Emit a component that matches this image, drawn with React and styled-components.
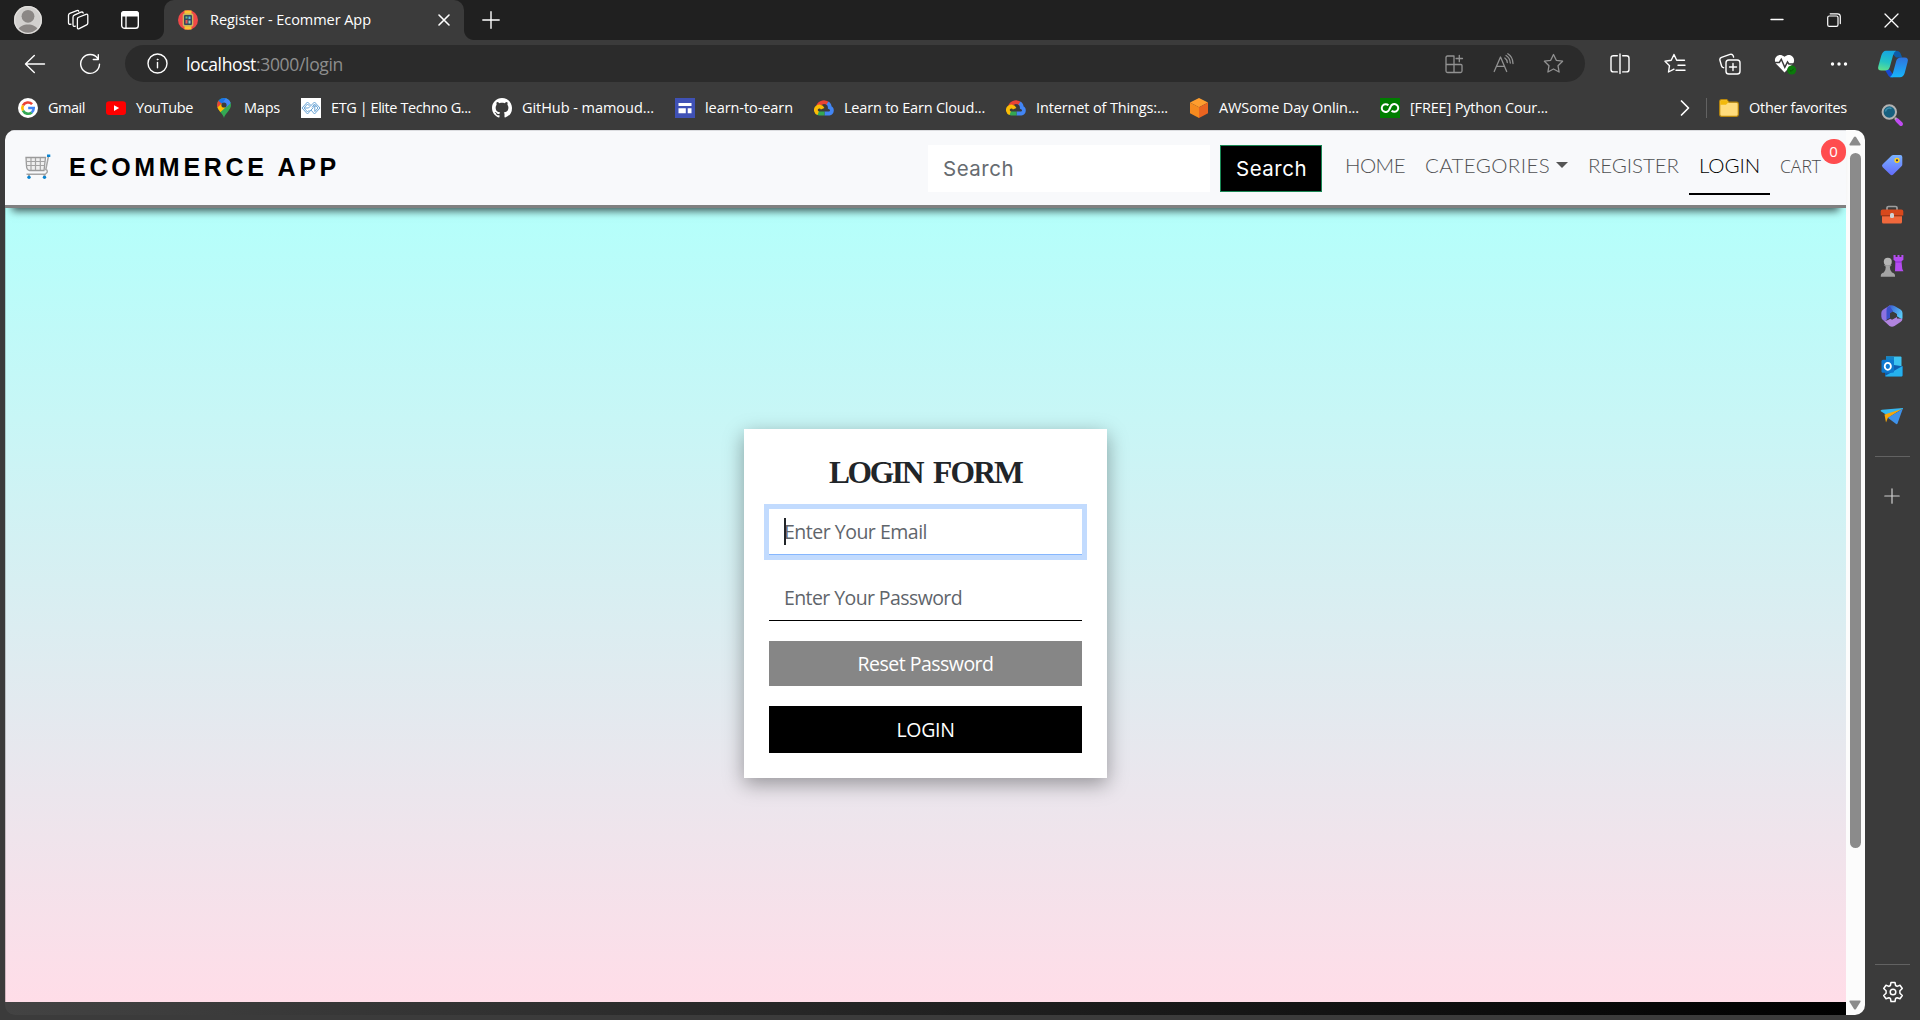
import React, { useLayoutEffect, useRef, useState } from "react";
import styled, { createGlobalStyle } from "styled-components";

const UI = `"Open Sans", "Noto Sans", sans-serif`;
const GEO = `Lato, "Open Sans", sans-serif`;
const SEARCH = `Inter, "Open Sans", sans-serif`;

const GlobalStyle = createGlobalStyle`
  * { box-sizing: border-box; }
  body { margin: 0; background: #3b3b3b; overflow: hidden; font-family: ${UI}; }
  svg { display: block; flex: none; }
`;

/* ---------- text fitted to a column width ---------- */
const Line = styled.span`
  display: inline-block;
  flex: none;
  white-space: nowrap;
  width: ${(p) => p.$width}px;
`;

function Fit({ width, children, className }) {
  const ref = useRef(null);
  const [spacing, setSpacing] = useState(0);
  useLayoutEffect(() => {
    const range = document.createRange();
    range.selectNodeContents(ref.current);
    const natural = range.getBoundingClientRect().width;
    setSpacing((width - natural) / children.length);
  }, [width, children]);
  return (
    <Line ref={ref} $width={width} className={className} style={{ letterSpacing: spacing }}>
      {children}
    </Line>
  );
}

/* ---------- browser shell ---------- */
const Shell = styled.div`
  width: 1920px;
  height: 1020px;
  display: flex;
  flex-direction: column;
  background: #3b3b3b;
  color: #fff;
  overflow: hidden;
`;
const TitleBar = styled.header`
  height: 40px;
  flex: none;
  display: flex;
  align-items: center;
  background: #202020;
`;
const TitleTools = styled.div`
  width: 164px;
  display: flex;
  align-items: center;
  gap: 25px;
  padding-left: 14px;
  & > :last-child { margin-left: 6px; }
`;
const Tab = styled.div`
  width: 300px;
  height: 40px;
  display: flex;
  align-items: center;
  padding: 0 14px;
  background: #3b3b3b;
  border-radius: 10px 10px 0 0;
  position: relative;
  &::before, &::after {
    content: "";
    position: absolute;
    bottom: 0;
    width: 10px;
    height: 10px;
  }
  &::before { left: -10px; background: radial-gradient(circle at 0 0, #202020 9.5px, #3b3b3b 10.5px); }
  &::after { right: -10px; background: radial-gradient(circle at 100% 0, #202020 9.5px, #3b3b3b 10.5px); }
`;
const TabTitle = styled(Fit)`
  margin-left: 12px;
  margin-right: auto;
  font-size: 14.5px;
  line-height: 20px;
`;
const NewTab = styled.div`
  margin-left: 18px;
`;
const WindowControls = styled.div`
  margin-left: auto;
  display: flex;
  align-items: center;
  gap: 43px;
  padding-right: 21px;
`;
const Body = styled.div`
  flex: 1;
  display: flex;
  min-height: 0;
`;
const Main = styled.div`
  width: 1865px;
  display: flex;
  flex-direction: column;
`;
const Toolbar = styled.div`
  height: 48px;
  flex: none;
  display: flex;
  align-items: center;
  padding: 0 0 1px 24px;
`;
const NavTools = styled.div`
  width: 101px;
  display: flex;
  gap: 33px;
`;
const AddressBar = styled.div`
  width: 1460px;
  height: 37px;
  border-radius: 19px;
  background: #2b2b2b;
  display: flex;
  align-items: center;
  padding: 0 21px 0 22px;
`;
const Url = styled.div`
  display: flex;
  margin-left: 18px;
  margin-right: auto;
  font-size: 17.5px;
  line-height: 24px;
`;
const Host = styled(Fit)` color: #fff; `;
const Path = styled(Fit)` color: #8e8e8e; `;
const AddressTools = styled.div`
  display: flex;
  align-items: center;
  gap: 29px;
`;
const ToolGroup = styled.div`
  display: flex;
  align-items: center;
  gap: 33px;
  margin-left: 24px;
`;
const Bookmarks = styled.nav`
  height: 42px;
  flex: none;
  display: flex;
  align-items: center;
  gap: 21px;
  padding: 0 18px 2px;
`;
const Bookmark = styled.div`
  display: flex;
  align-items: center;
  gap: 10px;
  font-size: 14.5px;
  line-height: 20px;
`;
const Overflow = styled.div`
  margin-left: auto;
  display: flex;
  align-items: center;
  gap: 16px;
`;
const Rule = styled.div`
  width: ${(p) => p.$w}px;
  height: ${(p) => p.$h}px;
  flex: none;
  background: #626262;
`;
const Folder = styled(Bookmark)` margin-left: -4px; `;

/* ---------- sidebar ---------- */
const Sidebar = styled.aside`
  width: 55px;
  display: flex;
  flex-direction: column;
  align-items: center;
  padding: 9px 0 17px;
`;
const SideApps = styled.div`
  display: flex;
  flex-direction: column;
  gap: 26.2px;
  margin: 24px 2px 28px 0;
`;
const SideAdd = styled.div` margin: 31px 1px auto 0; `;
const SideGear = styled.div` margin-top: 16px; `;

/* ---------- page ---------- */
const Page = styled.div`
  margin-left: 5px;
  height: 885px;
  display: flex;
  border-radius: 10px;
  overflow: hidden;
  background: #3b3b3b;
`;
const Content = styled.div`
  width: 1841px;
  display: flex;
  flex-direction: column;
`;
const NavBar = styled.div`
  height: 78px;
  flex: none;
  display: flex;
  align-items: flex-start;
  position: relative;
  z-index: 1;
  background: #f8f9fb;
  border-top: 1px solid #dcdde0;
  border-bottom: 3px solid #808080;
  box-shadow: 0 10px 8px -7px rgba(0, 0, 0, 0.65);
`;
const Brand = styled.div`
  display: flex;
  align-items: center;
  gap: 18px;
  margin: 21px auto 0 20px;
  color: #000;
  font: bold 25px/30px "Liberation Sans", Arial, sans-serif;
`;
const SearchForm = styled.form`
  display: flex;
  gap: 10px;
  margin: 14px 23px 0 0;
  font-family: ${SEARCH};
  font-size: 20.5px;
`;
const SearchField = styled.div`
  width: 282px;
  height: 47px;
  padding: 0 15px;
  line-height: 47px;
  background: #fff;
  color: #666b70;
`;
const SearchButton = styled.button`
  width: 102px;
  height: 47px;
  padding: 0 0 0 15px;
  text-align: left;
  border: 1px solid #198754;
  background: #000;
  color: #fff;
  font: 400 20.5px/45px ${SEARCH};
`;
const Links = styled.div`
  display: flex;
  align-items: flex-start;
  font: 300 20.5px/30px ${GEO};
  color: #505153;
`;
const NavItem = styled.div`
  height: 64px;
  display: flex;
  align-items: center;
  padding: 19px 10px 15px 10px;
  gap: 6px;
  ${(p) => p.$active && "color: #000; border-bottom: 2px solid #000; padding-bottom: 13px;"}
  &:first-child { padding-left: 0; }
`;
const Caret = styled.i`
  border: 6px solid transparent;
  border-top-color: #555;
  border-bottom: 0;
`;
const Cart = styled.div`
  width: 76px;
  padding: 20px 0 0 10px;
  position: relative;
  font: 300 17.5px/30px ${UI};
  color: #4b4b4b;
`;
const Badge = styled.span`
  position: absolute;
  right: 0;
  top: 8px;
  width: 25px;
  height: 25px;
  border-radius: 13px 12px 12px 13px;
  background: #ff4d4f;
  color: #fff;
  font: 400 15px/25px ${UI};
  text-align: center;
`;
const Backdrop = styled.main`
  flex: 1;
  display: flex;
  justify-content: center;
  align-items: flex-start;
  padding-top: 221px;
  background: linear-gradient(to bottom, #b4fffb, #ffdde8);
  box-shadow: inset 1px 0 rgba(0, 0, 0, 0.18);
`;
const Card = styled.form`
  width: 363px;
  height: 349px;
  display: flex;
  flex-direction: column;
  align-items: stretch;
  padding: 25px;
  background: #fff;
  box-shadow: 0 6px 19px rgba(0, 0, 0, 0.36);
`;
const Heading = styled.h4`
  flex: none;
  margin: -1px 0 16px;
  height: 40px;
  display: flex;
  justify-content: center;
  gap: 11px;
  color: #212529;
  font: bold 31.5px/40px "Liberation Serif", "Times New Roman", serif;
`;
const Field = styled.div`
  flex: none;
  height: 46px;
  margin-bottom: 20px;
  padding: 0 15px;
  line-height: 46px;
  font-size: 19.5px;
  color: #5f656b;
  position: relative;
  border-bottom: 1px solid ${(p) => (p.$focus ? "#86b7fe" : "#000")};
  ${(p) => p.$focus && "box-shadow: 0 0 0 5px #c2dbfe;"}
`;
const TextCursor = styled.i`
  position: absolute;
  left: 15px;
  top: 9px;
  width: 2px;
  height: 27px;
  background: #212529;
`;
const Action = styled.button`
  height: ${(p) => p.$height}px;
  flex: none;
  display: flex;
  justify-content: center;
  align-items: center;
  margin: 0 0 20px;
  padding: 0;
  border: 0;
  background: ${(p) => p.$bg};
  color: #fff;
  font: 400 19.5px/28px ${UI};
`;
const Footer = styled.footer`
  height: 13px;
  flex: none;
  background: linear-gradient(to right, #434343, #000);
`;
const Scrollbar = styled.div`
  width: 19px;
  background: #fcfcfc;
  display: flex;
  flex-direction: column;
  align-items: center;
  padding: 6px 1px 5px 0;
`;
const Thumb = styled.div`
  width: 11px;
  height: 695px;
  margin: 7px 0 auto;
  border-radius: 6px;
  background: #8b8b8b;
`;

/* ---------- icons ---------- */
const Stroke = ({ w = 20, h = w, box, color = "#fff", sw = 1.4, children }) => (
  <svg width={w} height={h} viewBox={box || `0 0 ${w} ${h}`} fill="none" stroke={color} strokeWidth={sw} strokeLinecap="round" strokeLinejoin="round">
    {children}
  </svg>
);

const Avatar = () => (
  <svg width="28" height="28" viewBox="0 0 28 28">
    <defs><clipPath id="av"><circle cx="14" cy="14" r="14" /></clipPath></defs>
    <g clipPath="url(#av)">
      <rect width="28" height="28" fill="#d2d0ce" />
      <circle cx="14" cy="10.3" r="6.4" fill="#8b8785" />
      <path d="M3.5 24C7 16.500 21 16.500 24.500 24L24 28H4z" fill="#8b8785" />
    </g>
    <circle cx="14" cy="14" r="13.300" fill="none" stroke="#e1dfdd" strokeWidth="1.300" />
  </svg>
);
const Workspaces = () => (
  <Stroke w={22} sw={1.3}>
    <path d="M11 8.500l8-3.200q1.800-.6 1.800 1.200v7.500q0 1.200-1.200 1.800l-7.400 3.800q-1.800.8-1.800-1.200v-8.200q0-1.200.6-1.700z" />
    <path d="M8.300 17.200q-2.300.8-2.300-1.400V8.200q0-1.400 1.300-2L14 3.200q1.600-.6 2.200.8" />
    <path d="M4 15.200q-2.500.7-2.500-1.500V6.300q0-1.400 1.300-1.900l7-2.800q1.500-.5 2 .6" />
  </Stroke>
);
const TabActions = () => (
  <svg width="20" height="20" viewBox="0 0 20 20">
    <rect x="1.700" y="1.700" width="16.600" height="16.600" rx="2.800" fill="none" stroke="#fff" strokeWidth="1.400" />
    <path d="M1 6V4q0-3 3-3h12q3 0 3 3v2.500H1z" fill="#fff" />
    <path d="M6 6v12" stroke="#fff" strokeWidth="1.300" />
  </svg>
);
const WatchFavicon = () => (
  <svg width="20" height="20" viewBox="0 0 20 20">
    <circle cx="10" cy="10" r="10" fill="#f04848" />
    <path d="M6.500 .5h7v4h-7zM6.500 15.500h7v4h-7z" fill="#fbc531" />
    <rect x="4.700" y="3.500" width="10.600" height="13" rx="1.500" fill="#c9b45c" />
    <rect x="6" y="5" width="8" height="10" rx="1" fill="#34495e" />
    <path d="M7.500 6.500h2v2h-2z" fill="#69c779" /><path d="M10.500 6.500h2v2.500h-2z" fill="#5db9e8" />
    <path d="M7.500 10h2v3.500h-2z" fill="#e85b54" /><path d="M10.500 10.500h2v3h-2z" fill="#8fd0c0" />
  </svg>
);
const Cross = ({ size, sw = 1.4 }) => (
  <Stroke w={size} sw={sw}><path d={`M1 1L${size - 1} ${size - 1}M${size - 1} 1L1 ${size - 1}`} /></Stroke>
);
const Plus = ({ size = 18, color = "#fff", sw = 1.4 }) => (
  <Stroke w={size} color={color} sw={sw}><path d={`M${size / 2} .8V${size - 0.8}M.8 ${size / 2}H${size - 0.8}`} /></Stroke>
);
const Restore = () => (
  <Stroke w={14} sw={1.2}><rect x=".7" y="3" width="10.300" height="10.300" rx="1.600" /><path d="M3.200.8h7.300q2.800 0 2.800 2.800v7" /></Stroke>
);
const Back = () => (<Stroke w={22}><path d="M20.500 11H1.700M10.300 2.500L1.500 11l8.800 8.500" /></Stroke>);
const Reload = () => (<Stroke w={22}><path d="M18.800 5.500a9.400 9.400 0 1 0 1.700 5.800M19.300 1.700v4.800h-5" /></Stroke>);
const Info = () => (
  <Stroke w={21}><circle cx="10.500" cy="10.500" r="9.500" /><path d="M10.500 9.500v5.300" /><circle cx="10.500" cy="6.500" r=".5" fill="#fff" stroke="#fff" strokeWidth=".8" /></Stroke>
);
const AppAdd = () => (
  <Stroke w={20} color="#929292" sw={1.3}><path d="M9.500 2H3.500Q2 2 2 3.500V17q0 1.500 1.500 1.500h13q1.500 0 1.500-1.500v-5.500q0-1-1-1H2M10 2v16.500M15.300 1.300v6.400M12.100 4.500h6.400" /></Stroke>
);
const ReadAloud = () => (
  <Stroke w={21} color="#929292" sw={1.3}><path d="M1.200 18.500L7.500 4l6.200 14.500M3.500 13.300h8M11.800 5q2.300 1.500 2.500 4.500M13 2.500q4 2.300 4.300 7.500M14.800.8q5 3 5.200 9.700" /></Stroke>
);
const starPath = "M10.500 1.500l2.800 5.800 6.300.9-4.600 4.500 1.100 6.300-5.600-3-5.600 3 1.100-6.300-4.600-4.500 6.300-.9z";
const Star = () => (<Stroke w={21} color="#929292" sw={1.3}><path d={starPath} /></Stroke>);
const Split = () => (
  <Stroke w={22} sw={1.4}><path d="M8.300 2.700H4.500q-2.500 0-2.500 2.500v11.200q0 2.500 2.500 2.500h3.800M13.700 2.700h3.800q2.500 0 2.500 2.500v11.200q0 2.500-2.500 2.500h-3.800M11 1v19.500" /></Stroke>
);
const FavList = () => (
  <Stroke w={22} sw={1.4}><path d="M12.700 7.300L10 1.500 7.200 7.300l-6.200.9 4.500 4.500-1 6.300L10 16.200M12.700 7.300h7.800M14 12.300h7M12 17.300h9" /></Stroke>
);
const Collections = () => (
  <Stroke w={22} sw={1.4}><rect x="7" y="7" width="14" height="14" rx="2.800" /><path d="M14 10.500v7M10.500 14h7M4.600 14.700l-.8-.3q-1-.5-1.300-1.600L1 7.500q-.7-2.300 1.500-3.200L11 1.400q2.300-.7 3.200 1.400l.4 1.300" /></Stroke>
);
const HeartPulse = () => (
  <svg width="23" height="22" viewBox="0 0 23 22">
    <path d="M10.500 19.500L2 10.700C-1.500 6 4-1.200 10.500 3.800 17-1.200 22.500 6 19 10.700z" fill="#fff" />
    <path d="M0 9.500h5.300l2-3.200 3.500 8 2.700-5.300 1.400 2H21" fill="none" stroke="#3b3b3b" strokeWidth="1.500" />
    <circle cx="17.700" cy="17" r="4.500" fill="#0b7a0b" />
    <path d="M15.700 17l1.400 1.400 2.600-2.700" fill="none" stroke="#075507" strokeWidth="1" />
  </svg>
);
const Dots = () => (
  <svg width="18" height="6" viewBox="0 0 18 6" fill="#fff"><circle cx="2.500" cy="3" r="1.700" /><circle cx="9" cy="3" r="1.700" /><circle cx="15.500" cy="3" r="1.700" /></svg>
);
const Google = () => (
  <svg width="20" height="20" viewBox="0 0 20 20">
    <circle cx="10" cy="10" r="10" fill="#fff" />
    <g fill="none" strokeWidth="2.600">
      <path d="M14.100 6.200A5.700 5.700 0 0 0 5 7.400" stroke="#ea4335" />
      <path d="M5 7.400A5.700 5.700 0 0 0 5 12.700" stroke="#fbbc05" />
      <path d="M5 12.600A5.700 5.700 0 0 0 13.800 14.400" stroke="#34a853" />
      <path d="M13.700 14.400A5.700 5.700 0 0 0 15.700 10H10.200" stroke="#4285f4" />
    </g>
  </svg>
);
const YouTube = () => (
  <svg width="20" height="20" viewBox="0 0 20 20"><rect y="3.300" width="20" height="13.700" rx="3.200" fill="#f00" /><path d="M8 7.200l5.200 2.900L8 13z" fill="#fff" /></svg>
);
const MapPin = () => (
  <svg width="20" height="20" viewBox="0 0 20 20">
    <defs><clipPath id="pin"><path d="M10 20C9 15.500 3 12 3 7a7 7 0 0 1 14 0c0 5-6 8.500-7 13z" /></clipPath></defs>
    <g clipPath="url(#pin)">
      <rect width="20" height="20" fill="#34a853" />
      <path d="M0 2l4 0 6 5-6 7-4-3z" fill="#ea4335" />
      <path d="M2 10.500L9 4.500l3.500 4L5.500 15z" fill="#fbbc04" />
      <path d="M7.500 3.200L9.500-1H18v5l-6 5.500z" fill="#4285f4" />
      <path d="M4 2.500l4 3.300L12 0H6z" fill="#1a73e8" />
    </g>
    <circle cx="10" cy="7" r="2.600" fill="#3b3b3b" />
  </svg>
);
const Etg = () => (
  <svg width="20" height="20" viewBox="0 0 20 20">
    <rect width="20" height="20" fill="#fff" />
    <g fill="none" stroke="#5b9bd0" strokeWidth=".9">
      <path d="M10 12l-3.500 4L1 10l5.500-6L10 7.500 13.500 4 19 10l-5.500 6L10 12l2.500-2.500M10 7.500L7.500 10" />
      <path d="M8.500 8L6.500 6 3 10l3.500 4 2-2M4 10h3.500M12 8h3.500M13.800 8v5M11 9.500L13.500 6 17 10l-3.500 4" />
    </g>
  </svg>
);
const GitHub = () => (
  <svg width="20" height="20" viewBox="0 0 16 16" fill="#fff"><path d="M8 0C3.580 0 0 3.580 0 8c0 3.540 2.290 6.530 5.470 7.590.4.070.55-.17.55-.38 0-.19-.01-.82-.01-1.490-2.010.37-2.530-.49-2.690-.94-.09-.23-.48-.94-.82-1.130-.28-.15-.68-.52-.01-.53.63-.01 1.080.58 1.230.82.72 1.210 1.870.87 2.330.66.070-.52.28-.87.51-1.070-1.780-.2-3.640-.89-3.640-3.950 0-.87.31-1.590.82-2.150-.08-.2-.36-1.020.08-2.120 0 0 .67-.21 2.200.82.64-.18 1.320-.27 2-.27s1.360.09 2 .27c1.530-1.040 2.200-.82 2.200-.82.44 1.100.16 1.920.08 2.120.51.56.82 1.270.82 2.150 0 3.070-1.870 3.750-3.650 3.950.29.25.54.73.54 1.480 0 1.070-.01 1.930-.01 2.200 0 .21.15.46.55.38A8.010 8.010 0 0 0 16 8c0-4.420-3.580-8-8-8z" /></svg>
);
const Sites = () => (
  <svg width="20" height="20" viewBox="0 0 20 20"><rect width="20" height="20" fill="#3f51b5" /><path d="M3.500 5h13v3h-13zM3.500 10.300h7.300v5H3.500zM12.700 10.300h3.800v5h-3.800z" fill="#fff" /></svg>
);
const Cloud = () => (
  <svg width="20" height="20" viewBox="0 0 20 20" fill="none" strokeWidth="3.800">
    <path d="M4 8.200A6.300 6.300 0 0 1 14.500 6.200" stroke="#ea4335" />
    <path d="M13.500 5q2.300 1.500 2.300 4.500a3.100 3.100 0 0 1-.6 6H10.500" stroke="#4285f4" />
    <path d="M10.500 15.500H5.500L3 14.800" stroke="#34a853" />
    <path d="M4.200 15.300A3.500 3.500 0 1 1 8.600 10.700" stroke="#fbbc05" />
  </svg>
);
const AwsCube = () => (
  <svg width="20" height="20" viewBox="0 0 20 20"><path d="M10 0l9 4.500-9 4.700-9-4.700z" fill="#ff9d2e" /><path d="M1 4.500l9 4.700V20l-9-4.700z" fill="#f58a1f" /><path d="M19 4.500l-9 4.700V20l9-4.700z" fill="#ea6420" /></svg>
);
const Infinity8 = () => (
  <svg width="20" height="20" viewBox="0 0 20 20"><rect width="20" height="20" fill="#007d00" /><path d="M8.400 7.300A3.900 3.900 0 1 0 9.300 11.500L10.700 8.500A3.900 3.900 0 1 1 11.600 12.700" fill="none" stroke="#fff" strokeWidth="2" /></svg>
);
const FolderIcon = () => (
  <svg width="20" height="20" viewBox="0 0 20 20"><path d="M.7 3.500q0-1.800 1.800-1.800h5.300l2 2.500h7.700q1.800 0 1.800 1.800v10.500q0 1.800-1.800 1.800h-15q-1.800 0-1.800-1.800z" fill="#ffdc7c" stroke="#b8860b" strokeWidth="1.200" /><path d="M1.300 6.700V3.500q0-1.200 1.200-1.200h5l1.700 2.100-2.200 2.300z" fill="#f2b90c" /></svg>
);
const CartIcon = () => (
  <svg width="26" height="26" viewBox="0 0 26 26" fill="none">
    <path d="M1 3.500h19.500L19 16.500H4.500Q1.700 16 1.500 12z" fill="#efefef" stroke="#9b9b9b" strokeWidth="1.300" />
    <path d="M1.500 7.500H20M1.500 11.500h18M6 4v12M10.500 4v12M15.300 4v12" stroke="#a3a3a3" strokeWidth="1.200" />
    <path d="M23.500 2l-2.700 13.500q3 1.500.2 4l-1 .8H1.500" stroke="#a6a6a6" strokeWidth="1.500" />
    <path d="M22 1.800h3.300" stroke="#0a84d0" strokeWidth="2.400" />
    <circle cx="4" cy="23.300" r="1.700" fill="#0a84d0" /><circle cx="19.500" cy="23.300" r="1.700" fill="#0a84d0" />
    <path d="M3 21h2M18.500 21h2" stroke="#999" strokeWidth="1.500" />
  </svg>
);
const Copilot = () => (
  <svg width="32" height="30" viewBox="0 0 32 30">
    <defs>
      <linearGradient id="cpa" x1=".4" y1="0" x2=".2" y2="1"><stop stopColor="#16a6e2" /><stop offset=".55" stopColor="#24c4c4" /><stop offset="1" stopColor="#62e28c" /></linearGradient>
      <linearGradient id="cpb" x1=".5" y1="0" x2=".5" y2="1"><stop stopColor="#2f72dd" /><stop offset="1" stopColor="#17b5fa" /></linearGradient>
    </defs>
    <path d="M13 2h7q3 0 4.200 4l1 2.500H19z" fill="#0d5ca8" />
    <path d="M8 21l4.500-.5L17 27l-1 1.500q-4 0-5-2.500z" fill="#1749d1" />
    <path d="M9 1.800h10q-2 1.200-3 4.700L12.800 18q-.9 3.500-4.800 3.500H4.500Q0 21.500 1.400 17L4.300 6.500Q5.800 1.800 9 1.800z" fill="url(#cpa)" />
    <path d="M23 28.300H13q2-1.500 3-4.500L19.200 12q.9-3.500 4.800-3.500h3.500Q32 8.500 30.600 13L27.700 24q-1.500 4.300-4.700 4.300z" fill="url(#cpb)" />
  </svg>
);
const SideIcon = ({ children }) => (<svg width="24" height="24" viewBox="0 0 24 24">{children}</svg>);
const Magnifier = () => (
  <SideIcon>
    <path d="M15 15l2 2" stroke="#b5b5b5" strokeWidth="2.500" />
    <path d="M17.300 17.300l3.700 3.700" stroke="#c04bf2" strokeWidth="4" strokeLinecap="round" />
    <circle cx="9.300" cy="9" r="6.700" fill="#17607f" stroke="#b3b3b3" strokeWidth="2" />
    <path d="M5.500 8.500a4 4 0 0 1 6-3" fill="none" stroke="#3e8fae" strokeWidth="1.500" />
  </SideIcon>
);
const Tag = () => (
  <SideIcon>
    <defs><linearGradient id="tg" x1=".5" y1="0" x2=".5" y2="1"><stop stopColor="#79b2ff" /><stop offset="1" stopColor="#636bfb" /></linearGradient></defs>
    <path d="M13.300 2h7q2 0 2 2v7.500q0 1-.8 1.800l-8.300 8.300q-1.500 1.500-3 0l-7.500-7.300q-1.500-1.500 0-3l8.700-8.500q.8-.8 1.900-.8z" fill="url(#tg)" />
    <circle cx="17" cy="7.300" r="1.900" fill="#303060" stroke="#ffd21c" strokeWidth="1.500" />
  </SideIcon>
);
const Toolbox = () => (
  <SideIcon>
    <path d="M7 7V4.800Q7 3.500 8.500 3.500h7q1.500 0 1.500 1.300V7" fill="none" stroke="#9e9e9e" strokeWidth="1.700" />
    <rect x="2" y="8" width="20" height="12.500" rx="1.500" fill="#f0683c" /><path d="M.7 8.500q0-2 2-2h18.600q2 0 2 2v4H.7z" fill="#d8481c" />
    <path d="M2 12.800h20" stroke="#8b2a0d" /><rect x="10" y="10" width="4" height="5" rx="1.500" fill="#cfd3d6" />
  </SideIcon>
);
const Chess = () => (
  <SideIcon>
    <path d="M13.500 1h2.100v2h1.900V1h2v2h1.900V1h2v4.700l-1.900 1.500.8 7.800 1.200 2.300h-8.500L15.400 7.200 13.500 5.700z" fill="#b44cf0" />
    <path d="M15.300 8h5.700" stroke="#8c2bd0" />
    <circle cx="7.800" cy="7.700" r="4" fill="#b4b4b4" />
    <path d="M3.800 11.300h8l-2 1.500q0 3.500 2.200 5.800 3 .7 3 3.200v1H.8v-1q0-2.500 3-3.200 2-2.300 2-5.800z" fill="#a3a3a3" />
  </SideIcon>
);
const M365 = () => (
  <SideIcon>
    <defs><linearGradient id="ma" x1="0" y1="0" x2="1" y2=".6"><stop stopColor="#3955cf" /><stop offset="1" stopColor="#58c9f8" /></linearGradient></defs>
    <path d="M8.500 2q3-1.700 6 0l6 3.500q2 1.200 2 3.500v5q0 1-1 1L16.500 12V9.800L12 7.300z" fill="url(#ma)" />
    <path d="M10.500 1L8.500 4.500V14L5 17.300 3.300 16.300Q1.300 15 1.300 12.500V9q0-2.300 2-3.500l6-3.700z" fill="#8d72e0" />
    <path d="M8.500 2.300Q6.500 3.500 6.500 6v9.500l4.500-2V9.700L13 7 9.500 2z" fill="#3a50c8" />
    <path d="M3.300 16.300Q5.500 17.500 8 16l9-5v3.500l5.500.3q-.2 2.200-2 3.300l-6 3.900q-2.500 1.400-5 0z" fill="#b184df" />
    <path d="M10 9.200l2.700-1.500 4.300 2.500V13L12 15.700l-2-1.200z" fill="#3b3b3b" />
  </SideIcon>
);
const Outlook = () => (
  <SideIcon>
    <path d="M6 2.500h14.500q1 0 1 1V12H6z" fill="#3cc3f1" /><path d="M6 2.500h8V12H6z" fill="#1284c9" />
    <path d="M5 11h9l8.500 1.200v9q0 1-1 1H5z" fill="#0f5fb0" /><path d="M22.500 12L5 22q.4.400 1 .4h15.500q1 0 1-1z" fill="#25b1ee" />
    <rect x="1.500" y="5.800" width="12.500" height="13" rx="1.500" fill="#0d78cf" />
    <ellipse cx="7.800" cy="12.300" rx="3.100" ry="3.500" fill="none" stroke="#fff" strokeWidth="1.800" />
  </SideIcon>
);
const Plane = () => (
  <SideIcon>
    <path d="M.8 7.200Q0 6 2 5.700L22.700 4q.6.200.2 1L7.500 11.500z" fill="#35b7f0" />
    <path d="M4.500 10.500L22 5 7.800 14 6 18.500z" fill="#f7a70a" /><path d="M7.800 13.800L22.800 4.700 17.500 19.500q-.7 1.200-1.700.2z" fill="#3f92ea" />
  </SideIcon>
);
const Gear = () => (
  <Stroke w={22} sw={1.5}>
    <path d="M9 1.500h4l.6 3 1.500.9 2.900-1.100 2.300 3.200-2.400 2.300v2.400l2.400 2.300-2.300 3.200-2.900-1-1.500.8-.6 3H9l-.6-3-1.500-.8-2.900 1-2.300-3.200 2.400-2.300V9.800L1.700 7.500 4 4.300l2.900 1.100 1.500-.9z" />
    <circle cx="11" cy="11" r="2.800" />
  </Stroke>
);
const ScrollArrow = ({ down }) => (
  <svg width="12" height="10" viewBox="0 0 12 10"><path d={down ? "M1 .5h10q1 .5.500 1.300L7 9Q6 10 5 9L.5 1.800Q0 1 1 .5z" : "M1 9.500h10q1-.5.500-1.300L7 1Q6 0 5 1L.5 8.200Q0 9 1 9.500z"} fill="#8b8b8b" /></svg>
);

const bookmarks = [
  [Google, "Gmail", 37], [YouTube, "YouTube", 57], [MapPin, "Maps", 36],
  [Etg, "ETG | Elite Techno G...", 140], [GitHub, "GitHub - mamoud...", 132],
  [Sites, "learn-to-earn", 88], [Cloud, "Learn to Earn Cloud...", 141],
  [Cloud, "Internet of Things:...", 132], [AwsCube, "AWSome Day Onlin...", 140],
  [Infinity8, "[FREE] Python Cour...", 138],
];
const sideApps = [Magnifier, Tag, Toolbox, Chess, M365, Outlook, Plane];

export default function App() {
  return (
    <Shell>
      <GlobalStyle />
      <TitleBar>
        <TitleTools><Avatar /><Workspaces /><TabActions /></TitleTools>
        <Tab>
          <WatchFavicon />
          <TabTitle width={161}>Register - Ecommer App</TabTitle>
          <Cross size={12} sw={1.6} />
        </Tab>
        <NewTab><Plus size={18} /></NewTab>
        <WindowControls>
          <Stroke w={14}><path d="M1 6.500h12" /></Stroke>
          <Restore />
          <Cross size={15} sw={1.3} />
        </WindowControls>
      </TitleBar>
      <Body>
        <Main>
          <Toolbar>
            <NavTools><Back /><Reload /></NavTools>
            <AddressBar>
              <Info />
              <Url><Host width={70}>localhost</Host><Path width={87}>:3000/login</Path></Url>
              <AddressTools><AppAdd /><ReadAloud /><Star /></AddressTools>
            </AddressBar>
            <ToolGroup><Split /><FavList /><Collections /><HeartPulse /><Dots /></ToolGroup>
          </Toolbar>
          <Bookmarks>
            {bookmarks.map(([Icon, label, width]) => (
              <Bookmark key={label}><Icon /><Fit width={width}>{label}</Fit></Bookmark>
            ))}
            <Overflow>
              <Stroke w={10} h={18} sw={1.7}><path d="M1.500 2L8.500 9l-7 7" /></Stroke>
              <Rule $w={1} $h={20} />
              <Folder><FolderIcon /><Fit width={98}>Other favorites</Fit></Folder>
            </Overflow>
          </Bookmarks>
          <Page>
            <Content>
              <NavBar>
                <Brand><CartIcon /><Fit width={271}>ECOMMERCE APP</Fit></Brand>
                <SearchForm>
                  <SearchField><Fit width={71}>Search</Fit></SearchField>
                  <SearchButton type="button"><Fit width={71}>Search</Fit></SearchButton>
                </SearchForm>
                <Links>
                  <NavItem><Fit width={60}>HOME</Fit></NavItem>
                  <NavItem><Fit width={125}>CATEGORIES</Fit><Caret /></NavItem>
                  <NavItem><Fit width={91}>REGISTER</Fit></NavItem>
                  <NavItem $active><Fit width={61}>LOGIN</Fit></NavItem>
                  <Cart><Fit width={41}>CART</Fit><Badge>0</Badge></Cart>
                </Links>
              </NavBar>
              <Backdrop>
                <Card>
                  <Heading><Fit width={93}>LOGIN</Fit><Fit width={89}>FORM</Fit></Heading>
                  <Field $focus><TextCursor /><Fit width={143}>Enter Your Email</Fit></Field>
                  <Field><Fit width={178}>Enter Your Password</Fit></Field>
                  <Action type="button" $height={45} $bg="#868686"><Fit width={136}>Reset Password</Fit></Action>
                  <Action type="button" $height={47} $bg="#000"><Fit width={58}>LOGIN</Fit></Action>
                </Card>
              </Backdrop>
              <Footer />
            </Content>
            <Scrollbar><ScrollArrow /><Thumb /><ScrollArrow down /></Scrollbar>
          </Page>
        </Main>
        <Sidebar>
          <Copilot />
          <SideApps>{sideApps.map((Icon, i) => <Icon key={i} />)}</SideApps>
          <Rule $w={35} $h={1} />
          <SideAdd><Plus size={16} color="#d0d0d0" sw={1.2} /></SideAdd>
          <Rule $w={35} $h={1} />
          <SideGear><Gear /></SideGear>
        </Sidebar>
      </Body>
    </Shell>
  );
}
